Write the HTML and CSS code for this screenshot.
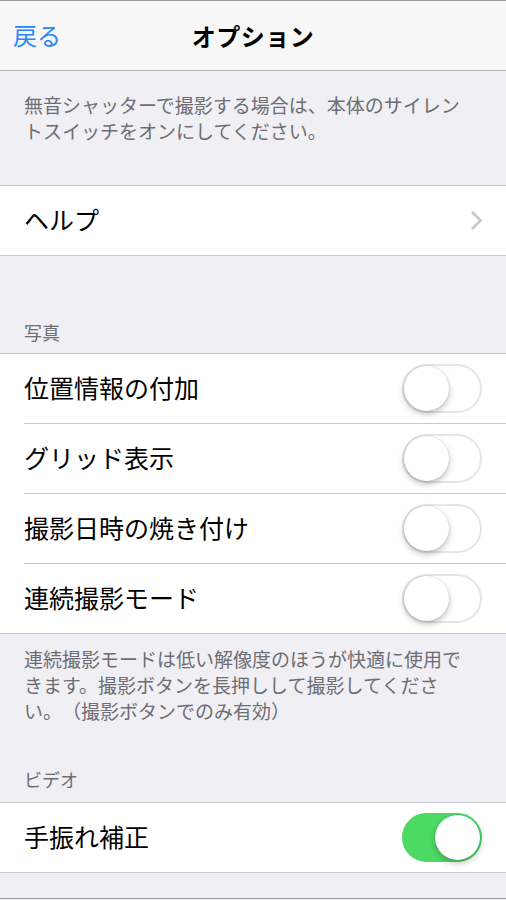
FILE: index.html
```html
<!DOCTYPE html>
<html lang="ja">

<head>
  <meta charset="UTF-8">
  <meta name="viewport" content="width=device-width, initial-scale=1.0">
  <title>オプション</title>
  <link rel="stylesheet" href="styles.css">
</head>

<body>
  <!--ナビゲーションバー-->
  <div class="nav">
    <a class="nav-back" href="javascript:;">戻る</a>
    <div class="nav-title">オプション</div>
  </div>

  <p class="note note-top">無音シャッターで撮影する場合は、本体のサイレントスイッチをオンにしてください。</p>

  <ul class="group">
    <li class="row">
      <div class="row-inner">
        <span class="row-label">ヘルプ</span>
        <svg class="chevron" width="13" height="21" viewBox="0 0 13 21">
          <path d="M2 2 L10.5 10.5 L2 19" fill="none" stroke="#c7c7cc" stroke-width="2.6" />
        </svg>
      </div>
    </li>
  </ul>

  <div class="header header-photo">写真</div>
  <ul class="group">
    <li class="row">
      <div class="row-inner">
        <span class="row-label">位置情報の付加</span>
        <span class="switch"><span class="knob"></span></span>
      </div>
    </li>
    <li class="row">
      <div class="row-inner">
        <span class="row-label">グリッド表示</span>
        <span class="switch"><span class="knob"></span></span>
      </div>
    </li>
    <li class="row">
      <div class="row-inner">
        <span class="row-label">撮影日時の焼き付け</span>
        <span class="switch"><span class="knob"></span></span>
      </div>
    </li>
    <li class="row">
      <div class="row-inner">
        <span class="row-label">連続撮影モード</span>
        <span class="switch"><span class="knob"></span></span>
      </div>
    </li>
  </ul>
  <p class="note note-burst">連続撮影モードは低い解像度のほうが快適に使用できます。撮影ボタンを長押しして撮影してください。（撮影ボタンでのみ有効）</p>

  <div class="header header-video">ビデオ</div>
  <ul class="group">
    <li class="row">
      <div class="row-inner">
        <span class="row-label">手振れ補正</span>
        <span class="switch on"><span class="knob"></span></span>
      </div>
    </li>
  </ul>

  <div class="bottom-bar"></div>
</body>

</html>
```

FILE: styles.css
```css
* {
  margin: 0;
  padding: 0;
}

body {
  background-color: #efeff4;
  font-family: "Noto Sans CJK JP", "Noto Sans", sans-serif;
  color: #000;
  /*句読点を全角のまま詰めない*/
  text-spacing-trim: space-all;
}

/*ナビゲーションバー*/
.nav {
  height: 69px;
  background-color: #f7f7f8;
  border-top: 1px solid #9c9c9c;
  border-bottom: 1px solid #b4b4b7;
  display: flex;
  align-items: center;
  justify-content: center;
  position: relative;
}

.nav-back {
  position: absolute;
  left: 13px;
  top: 16px;
  font-size: 24px;
  line-height: 36px;
  color: #2b86f7;
  text-decoration: none;
}

.nav-title {
  font-size: 24px;
  font-weight: bold;
  letter-spacing: 0.5px;
  line-height: 34px;
}

/*説明文*/
.note {
  font-size: 19px;
  line-height: 26px;
  color: #6d6d72;
  padding: 0 30px 0 24px;
}

.note-top {
  padding-top: 21px;
  padding-bottom: 41px;
}

.note-burst {
  padding-top: 12px;
  padding-bottom: 20px;
}

/*セクション見出し*/
.header {
  font-size: 18px;
  line-height: 22px;
  color: #6d6d72;
  padding: 0 24px 10px;
}

.header-photo {
  padding-top: 65px;
}

.header-video {
  padding-top: 24px;
  padding-bottom: 12px;
}

/*セル*/
.group {
  list-style: none;
  background-color: #fff;
  border-top: 1px solid #c8c7cc;
  border-bottom: 1px solid #c8c7cc;
}

.row {
  padding-left: 24px;
}

.row-inner {
  height: 69px;
  padding-right: 24px;
  display: flex;
  align-items: center;
  justify-content: space-between;
}

.row+.row .row-inner {
  border-top: 1px solid #c8c7cc;
}

.row-label {
  font-size: 25px;
  line-height: 34px;
  margin-top: -3px;
}

.chevron {
  display: block;
  margin-right: -1px;
}

/*スイッチ*/
.switch {
  width: 80px;
  height: 49px;
  box-sizing: border-box;
  border: 2px solid #e5e5ea;
  border-radius: 25px;
  background-color: #fff;
  position: relative;
}

.knob {
  position: absolute;
  top: 0;
  left: 0;
  width: 45px;
  height: 45px;
  border-radius: 50%;
  background-color: #fff;
  box-shadow: 0 3px 6px rgba(0, 0, 0, 0.25), 0 0 0 0.5px rgba(0, 0, 0, 0.1);
}

.switch.on {
  background-color: #4cd964;
  border-color: #4cd964;
}

.switch.on .knob {
  left: auto;
  right: 0;
}

.bottom-bar {
  margin-top: 25px;
  border-top: 1px solid #9c9c9c;
  height: 10px;
}
```
